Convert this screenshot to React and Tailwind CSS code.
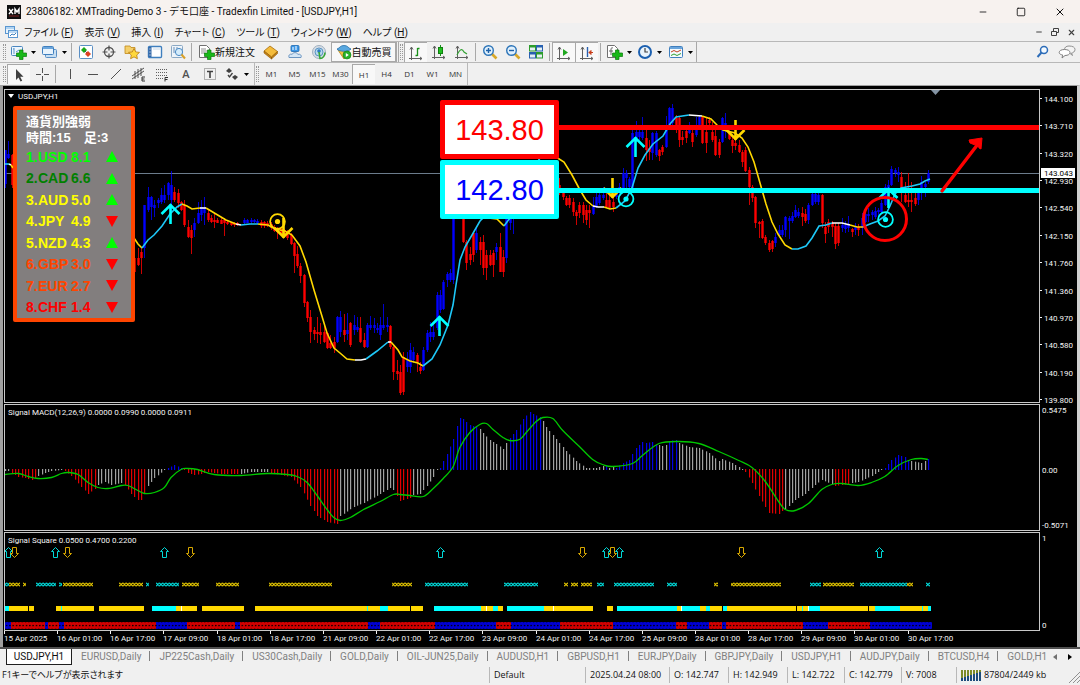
import React from "react";
import { Minus, Square, X } from "lucide-react";

const BAR_STEP = 3.32;
const barX = (i) => 5 + i * BAR_STEP;

const COLORS = {
	r: "#ff0000",
	b: "#0000ff",
	g: "#a0a0a0",
	y: "#ffd800",
	c: "#00ffff",
	w: "#ffffff",
};

// bar index, colour, high, body top, body bottom, low
const CANDLES = [
	[0, "b", 150, 150, 184, 188], [1, "b", 141, 154, 158, 159], [2, "r", 154, 155, 185, 188],
	[39, "r", 256, 258, 272, 273], [40, "r", 248, 258, 265, 266], [41, "r", 248, 252, 258, 274],
	[42, "b", 205, 205, 248, 258], [43, "b", 187, 197, 210, 212], [44, "b", 196, 197, 207, 220],
	[45, "b", 200, 205, 208, 217], [46, "b", 198, 200, 203, 208], [47, "b", 188, 195, 202, 204],
	[48, "b", 185, 195, 200, 203], [49, "b", 182, 183, 195, 200], [50, "b", 171, 185, 200, 211],
	[51, "r", 187, 192, 200, 202], [52, "r", 189, 193, 203, 208], [53, "r", 201, 202, 210, 211],
	[54, "r", 200, 205, 225, 227], [55, "r", 220, 227, 237, 238], [56, "r", 225, 230, 238, 254],
	[57, "b", 218, 223, 230, 237], [58, "b", 202, 213, 223, 224], [59, "b", 200, 207, 215, 221],
	[60, "b", 197, 208, 213, 225], [61, "r", 210, 213, 220, 222], [62, "r", 215, 218, 222, 223],
	[63, "r", 213, 220, 222, 228], [64, "r", 218, 220, 223, 223], [65, "r", 218, 220, 224, 224],
	[66, "r", 218, 220, 223, 236], [67, "r", 220, 222, 224, 225], [68, "r", 222, 222, 225, 226],
	[69, "r", 222, 223, 225, 227], [70, "r", 222, 223, 225, 226], [72, "b", 218, 220, 223, 224],
	[73, "b", 219, 220, 223, 223], [74, "b", 218, 220, 222, 224], [75, "b", 219, 220, 222, 223],
	[76, "b", 219, 221, 223, 224], [77, "r", 220, 222, 226, 228], [78, "r", 221, 222, 226, 228],
	[79, "r", 221, 223, 226, 227], [80, "r", 222, 224, 228, 230], [81, "r", 225, 227, 231, 232],
	[82, "r", 227, 229, 232, 239], [83, "r", 228, 229, 233, 234], [84, "r", 229, 230, 236, 237],
	[85, "r", 230, 232, 238, 240], [86, "r", 233, 235, 244, 245], [87, "r", 242, 243, 256, 273],
	[88, "r", 246, 254, 266, 268], [89, "r", 263, 266, 276, 283], [90, "r", 274, 275, 303, 307],
	[91, "r", 301, 302, 318, 322], [92, "r", 310, 317, 332, 343], [93, "r", 327, 330, 334, 340],
	[94, "r", 317, 332, 334, 343], [95, "r", 323, 332, 335, 344], [96, "r", 325, 332, 342, 343],
	[97, "r", 332, 333, 348, 349], [98, "r", 335, 343, 348, 349], [99, "r", 337, 342, 348, 353],
	[100, "b", 316, 317, 342, 343], [101, "b", 311, 317, 332, 337], [102, "r", 314, 330, 335, 342],
	[103, "b", 313, 330, 334, 340], [104, "r", 322, 323, 345, 347], [105, "b", 315, 325, 330, 335],
	[106, "b", 317, 327, 330, 332], [107, "r", 317, 328, 342, 343], [108, "r", 333, 340, 347, 348],
	[109, "b", 323, 325, 347, 348], [110, "b", 316, 325, 328, 330], [111, "b", 318, 325, 328, 333],
	[112, "b", 323, 328, 330, 333], [113, "b", 317, 325, 335, 340], [114, "b", 304, 325, 328, 330],
	[115, "b", 317, 325, 327, 332], [116, "r", 325, 326, 347, 349], [117, "r", 346, 347, 372, 380],
	[118, "r", 360, 371, 374, 380], [119, "r", 365, 372, 393, 395], [120, "r", 352, 357, 392, 395],
	[121, "b", 352, 360, 367, 372], [122, "b", 343, 350, 367, 373], [123, "b", 347, 352, 360, 363],
	[124, "r", 353, 355, 362, 372], [125, "r", 362, 367, 371, 374], [126, "b", 347, 350, 370, 371],
	[127, "b", 330, 333, 350, 352], [128, "b", 322, 332, 337, 342], [129, "b", 323, 332, 337, 340],
	[130, "b", 292, 295, 328, 330], [131, "b", 290, 295, 310, 313], [132, "b", 280, 282, 309, 310],
	[133, "b", 272, 274, 280, 287], [134, "b", 269, 273, 280, 282], [135, "b", 190, 192, 280, 284],
	[138, "r", 200, 218, 242, 243], [139, "r", 240, 242, 263, 270], [140, "r", 247, 254, 260, 265],
	[141, "r", 233, 233, 255, 262], [142, "b", 228, 233, 250, 253], [143, "r", 237, 242, 250, 265],
	[144, "r", 235, 242, 268, 275], [145, "r", 250, 255, 268, 280], [146, "r", 250, 255, 265, 266],
	[147, "r", 250, 253, 265, 277], [148, "b", 243, 247, 252, 260], [149, "r", 233, 247, 272, 272],
	[150, "r", 250, 257, 272, 277], [151, "b", 210, 218, 258, 263], [152, "b", 210, 215, 223, 230],
	[153, "b", 210, 214, 219, 234],
	[167, "r", 178, 185, 193, 195], [168, "r", 192, 193, 197, 200], [169, "r", 196, 198, 205, 206],
	[170, "r", 195, 198, 205, 208], [171, "r", 198, 202, 212, 216], [172, "r", 210, 212, 216, 225],
	[173, "r", 202, 205, 213, 218], [174, "r", 202, 205, 215, 223], [175, "r", 205, 210, 220, 225],
	[176, "r", 205, 210, 213, 228], [177, "b", 197, 205, 214, 215], [178, "b", 193, 197, 207, 208],
	[179, "b", 192, 195, 203, 205], [180, "b", 187, 195, 198, 200], [181, "r", 193, 200, 207, 208],
	[182, "r", 195, 200, 208, 209], [183, "r", 197, 202, 207, 212], [184, "b", 188, 191, 197, 199],
	[185, "b", 183, 187, 193, 195], [186, "b", 168, 173, 188, 190], [187, "b", 170, 173, 178, 190],
	[188, "b", 177, 179, 187, 188], [189, "b", 130, 133, 190, 190], [190, "b", 121, 132, 138, 142],
	[191, "b", 125, 132, 137, 140], [192, "b", 117, 132, 138, 140], [193, "r", 128, 138, 150, 161],
	[194, "r", 140, 148, 152, 160], [195, "b", 132, 133, 153, 160], [196, "b", 131, 133, 155, 157],
	[197, "r", 149, 150, 156, 161], [198, "r", 145, 147, 152, 155], [199, "b", 116, 125, 147, 148],
	[200, "b", 107, 108, 125, 127], [201, "b", 104, 108, 123, 125], [202, "r", 115, 118, 125, 133],
	[203, "r", 117, 118, 140, 147], [204, "r", 131, 137, 140, 145], [205, "r", 130, 131, 138, 143],
	[206, "b", 122, 125, 133, 134], [207, "r", 130, 133, 142, 147], [208, "b", 117, 125, 135, 137],
	[209, "b", 115, 117, 125, 127], [210, "r", 116, 117, 143, 144], [211, "r", 118, 132, 143, 153],
	[212, "r", 117, 120, 123, 128], [213, "r", 122, 132, 140, 142], [214, "r", 130, 136, 155, 156],
	[215, "r", 139, 142, 155, 158], [216, "b", 117, 118, 142, 143], [217, "b", 113, 123, 127, 138],
	[218, "r", 128, 133, 139, 140], [219, "r", 136, 140, 146, 153], [220, "r", 140, 143, 146, 150],
	[221, "r", 140, 145, 152, 153], [222, "r", 150, 152, 162, 167], [223, "r", 147, 150, 171, 172],
	[224, "r", 167, 170, 187, 205], [225, "r", 185, 187, 198, 202], [226, "r", 196, 197, 223, 228],
	[227, "r", 221, 222, 224, 238], [228, "r", 219, 221, 238, 239], [229, "r", 235, 237, 243, 245],
	[230, "r", 240, 243, 250, 252], [231, "r", 240, 241, 249, 252], [232, "b", 233, 237, 243, 247],
	[233, "b", 225, 230, 235, 237], [234, "b", 225, 230, 235, 237], [235, "b", 216, 217, 230, 237],
	[236, "b", 216, 218, 221, 239], [237, "b", 212, 216, 221, 223], [238, "b", 205, 210, 217, 218],
	[239, "b", 208, 212, 216, 218], [240, "r", 207, 213, 217, 226], [241, "r", 209, 214, 221, 223],
	[242, "b", 203, 205, 220, 224], [243, "b", 193, 194, 205, 206], [244, "b", 193, 194, 202, 204],
	[245, "b", 193, 195, 202, 205], [246, "r", 194, 195, 223, 228], [247, "r", 222, 227, 234, 243],
	[248, "r", 219, 222, 227, 233], [249, "r", 221, 223, 227, 237], [250, "r", 223, 226, 244, 249],
	[251, "r", 223, 226, 243, 246], [252, "b", 218, 225, 228, 232], [253, "b", 221, 225, 229, 233],
	[254, "b", 216, 225, 228, 232], [255, "r", 228, 229, 232, 237], [256, "b", 223, 226, 230, 235],
	[257, "r", 224, 227, 230, 236], [258, "b", 213, 218, 228, 235], [259, "b", 210, 214, 222, 223],
	[260, "b", 208, 214, 216, 222], [261, "b", 210, 212, 215, 220], [262, "b", 207, 211, 217, 219],
	[263, "b", 208, 210, 212, 216], [264, "b", 200, 203, 212, 213], [265, "b", 184, 187, 205, 206],
	[266, "b", 180, 185, 188, 195], [267, "b", 166, 169, 185, 186], [268, "b", 168, 170, 173, 177],
	[269, "b", 167, 172, 175, 182], [270, "r", 172, 177, 190, 202], [271, "r", 182, 195, 202, 203],
	[272, "r", 173, 200, 202, 207], [273, "r", 182, 200, 202, 212], [274, "r", 193, 198, 204, 206],
	[275, "b", 190, 193, 200, 205], [276, "b", 176, 182, 192, 200], [277, "b", 182, 184, 187, 197],
	[278, "b", 170, 173, 182, 184],
];

// moving average, one run per colour
const MA = [
	["c", [[5, 164], [9, 164]]],
	["w", [[9, 164], [11, 165]]],
	["y", [[11, 165], [13, 168]]],
	["y", [[134, 238], [138, 244], [142, 248]]],
	["c", [[142, 248], [148, 240], [154, 235], [162, 226], [170, 214], [177, 207], [182, 204]]],
	["y", [[182, 204], [187, 206], [192, 209], [200, 208]]],
	["w", [[200, 208], [206, 208]]],
	["y", [[206, 208], [216, 214], [226, 220], [236, 224]]],
	["w", [[236, 224], [241, 225]]],
	["c", [[241, 225], [250, 224], [258, 224]]],
	["y", [[258, 224], [268, 225], [275, 229], [285, 231], [292, 235], [300, 246], [306, 262], [314, 290], [321, 313], [327, 333], [334, 348], [340, 353], [347, 359], [355, 360]]],
	["w", [[355, 360], [361, 360], [366, 359]]],
	["c", [[366, 359], [377, 351], [388, 342]]],
	["w", [[388, 342], [391, 342]]],
	["y", [[391, 342], [398, 350], [402, 357], [410, 361], [418, 363], [423, 366]]],
	["c", [[423, 366], [432, 359], [440, 345], [448, 325], [453, 305], [456, 285], [460, 260], [465, 247], [472, 235], [480, 221], [487, 214]]],
	["y", [[488, 218], [497, 219], [504, 226]]],
	["c", [[504, 226], [510, 218], [520, 190], [540, 158]]],
	["y", [[556, 157], [564, 162], [572, 175], [580, 190], [586, 200], [593, 206]]],
	["w", [[593, 206], [598, 207], [604, 207]]],
	["y", [[604, 207], [610, 209], [616, 208]]],
	["c", [[616, 208], [625, 201], [632, 188], [638, 168], [645, 155], [653, 144], [663, 136], [670, 124], [676, 117], [689, 115]]],
	["w", [[689, 115], [702, 116]]],
	["y", [[702, 116], [711, 119], [717, 125], [723, 130], [735, 133], [742, 138], [748, 147], [754, 162], [760, 183], [766, 204], [772, 222], [778, 234], [785, 245], [792, 249]]],
	["c", [[792, 249], [798, 249], [806, 246], [812, 238], [819, 226], [826, 225], [832, 223]]],
	["w", [[832, 223], [842, 223], [850, 225]]],
	["y", [[850, 225], [857, 227], [863, 227]]],
	["c", [[863, 227], [870, 224], [878, 221], [885, 216], [890, 206], [895, 194], [901, 188], [912, 186], [920, 184], [925, 181], [930, 179]]],
];

// colour, then [bar index, height above zero]
const MACD = [
	["g", [[0, -2], [1, -2]]],
	["r", [[2, -4], [4, -8], [6, -9], [8, -11], [9, -9]]],
	["g", [[10, -7], [12, -4], [14, -2], [17, -1]]],
	["r", [[18, -2], [20, -7], [23, -18], [25, -25], [27, -20]]],
	["g", [[28, -16], [30, -13], [32, -16], [35, -14]]],
	["r", [[36, -16], [38, -25], [40, -31], [41, -31], [42, -24]]],
	["g", [[43, -17], [45, -9], [48, -1]]],
	["b", [[49, 2], [51, 5], [53, 2]]],
	["r", [[54, -1], [55, -4], [57, -6], [59, -5], [61, -3], [65, -5], [70, -5]]],
	["g", [[71, -5], [74, -3], [79, -3]]],
	["r", [[80, -4], [86, -8], [89, -18], [92, -37], [94, -47], [97, -53], [100, -55]]],
	["g", [[101, -47], [105, -38], [108, -34], [113, -25], [116, -19], [117, -21]]],
	["r", [[118, -27], [119, -32], [122, -29]]],
	["g", [[123, -26], [125, -25], [127, -17], [129, -8], [130, -1]]],
	["b", [[131, 2], [133, 16], [135, 31], [136, 44], [137, 52], [138, 51], [140, 45], [142, 43]]],
	["g", [[143, 41], [144, 37], [146, 30], [148, 26], [150, 21], [151, 27]]],
	["b", [[152, 32], [154, 40], [156, 51], [158, 58], [159, 56], [161, 53]]],
	["g", [[162, 49], [163, 43], [166, 31], [169, 19], [172, 9], [175, 2], [178, 2], [180, 4]]],
	["b", [[181, 4], [181, 4]]],
	["g", [[182, 2], [183, 3]]],
	["b", [[184, 2], [186, 7], [188, 10], [190, 22], [192, 28], [193, 27], [195, 28], [196, 25]]],
	["g", [[197, 25], [198, 24], [199, 25]]],
	["b", [[200, 29], [202, 30]]],
	["g", [[203, 27], [206, 23], [209, 22], [212, 17], [215, 9], [216, 11], [219, 7], [222, 1]]],
	["r", [[223, -3], [225, -14], [227, -27], [229, -38], [230, -44], [233, -45], [234, -42]]],
	["g", [[235, -40], [238, -31], [241, -25], [244, -16], [246, -11], [249, -15]]],
	["r", [[250, -17], [252, -16], [254, -15]]],
	["g", [[255, -14], [257, -13], [261, -7], [264, -1]]],
	["b", [[265, 2], [267, 10], [269, 15], [271, 13], [272, 10]]],
	["g", [[273, 9], [276, 7], [277, 9]]],
	["b", [[278, 11], [278, 11]]],
];

const MACD_SIGNAL = [
	[0, -5], [4, -4], [7, -7], [10, -9], [14, -8], [17, -4], [19, -3], [22, -5], [25, -13], [28, -18],
	[31, -19], [35, -16], [37, -16], [40, -21], [42, -24], [45, -23], [48, -18], [50, -8], [53, 0],
	[55, 1], [58, 0], [63, -5], [71, -6], [79, -4], [85, -5], [88, -7], [91, -13], [94, -26],
	[97, -40], [99, -48], [101, -51], [104, -48], [108, -40], [113, -32], [117, -25], [119, -25],
	[122, -26], [126, -27], [129, -19], [132, -9], [135, 3], [137, 22], [140, 37], [143, 45],
	[145, 46], [147, 40], [150, 32], [152, 29], [155, 30], [157, 37], [160, 48], [162, 52],
	[165, 51], [168, 39], [173, 23], [177, 10], [180, 5], [183, 3], [189, 6], [192, 14], [197, 26],
	[203, 28], [209, 26], [215, 18], [221, 9], [225, 2], [229, -12], [233, -32], [235, -40],
	[238, -41], [242, -34], [246, -20], [249, -15], [252, -14], [257, -16], [261, -13], [265, -7],
	[269, 4], [273, 10], [276, 11], [278, 10],
];

const CROSSES = [
	["c", 5, 9], ["y", 9, 20], ["y", 23, 26], ["c", 36, 56], ["c", 59, 62], ["y", 63, 93],
	["y", 119, 143], ["c", 146, 149], ["c", 156, 179], ["y", 182, 199], ["y", 216, 239],
	["y", 269, 332], ["y", 392, 412], ["c", 425, 468], ["c", 504, 538], ["y", 564, 568],
	["y", 571, 578], ["y", 581, 592], ["c", 597, 604], ["c", 614, 654], ["c", 667, 677],
	["y", 714, 718], ["y", 731, 781], ["c", 810, 821], ["y", 823, 854], ["c", 860, 907],
	["y", 907, 913], ["c", 926, 930],
];

const SQUARES = [
	["c", 5, 9], ["y", 9, 28], ["y", 29, 34], ["y", 56, 94], ["c", 61, 62], ["y", 99, 144],
	["c", 152, 176], ["y", 176, 197], ["w", 181, 182], ["y", 202, 244], ["y", 255, 380],
	["c", 367, 368], ["c", 380, 388], ["y", 388, 410], ["y", 411, 423], ["c", 434, 481],
	["y", 481, 493], ["w", 486, 487], ["c", 493, 498], ["y", 498, 503], ["c", 507, 544],
	["y", 544, 593], ["w", 553, 554], ["y", 607, 613], ["c", 617, 677], ["y", 677, 681],
	["w", 681, 682], ["c", 682, 700], ["y", 700, 706], ["c", 706, 710], ["y", 710, 722],
	["c", 723, 727], ["y", 727, 796], ["y", 797, 808], ["c", 802, 803], ["w", 808, 809],
	["c", 809, 820], ["y", 820, 868], ["y", 869, 875], ["c", 875, 900], ["y", 900, 928],
	["c", 922, 923], ["c", 928, 931],
];

const TREND = [
	["b", 5, 11], ["r", 11, 59], ["b", 45, 48], ["b", 59, 64], ["r", 64, 156], ["b", 156, 187],
	["r", 187, 235], ["b", 235, 240], ["r", 240, 368], ["b", 368, 380], ["r", 380, 435],
	["b", 435, 496], ["r", 496, 511], ["b", 511, 560], ["r", 560, 613], ["b", 613, 676],
	["r", 676, 687], ["b", 687, 709], ["r", 709, 803], ["b", 722, 726], ["b", 803, 828],
	["r", 828, 870], ["b", 870, 932],
];

const SIGNALS_UP = [8, 55, 164, 440, 606, 619, 879];
const SIGNALS_DOWN = [14, 67, 190, 582, 612, 741];

const PRICES = ["144.100", "143.710", "143.320", "142.930", "142.540", "142.150", "141.760", "141.360", "140.970", "140.580", "140.190", "139.800"];

const TIMES = ["15 Apr 2025", "16 Apr 01:00", "16 Apr 17:00", "17 Apr 09:00", "18 Apr 01:00", "18 Apr 17:00", "21 Apr 09:00", "22 Apr 01:00", "22 Apr 17:00", "23 Apr 09:00", "24 Apr 01:00", "24 Apr 17:00", "25 Apr 09:00", "28 Apr 01:00", "28 Apr 17:00", "29 Apr 09:00", "30 Apr 01:00", "30 Apr 17:00"];

const STRENGTH = [
	["1.", "USD", "8.1", true, "text-[#00ff00]"],
	["2.", "CAD", "6.6", true, "text-[#008000]"],
	["3.", "AUD", "5.0", true, "text-[#ffff00]"],
	["4.", "JPY", "4.9", false, "text-[#ffff00]"],
	["5.", "NZD", "4.3", true, "text-[#ffff00]"],
	["6.", "GBP", "3.0", false, "text-[#ff4500]"],
	["7.", "EUR", "2.7", false, "text-[#ff4500]"],
	["8.", "CHF", "1.4", false, "text-[#ff0000]"],
];

const MENU = [
	["ファイル", "F"],
	["表示", "V"],
	["挿入", "I"],
	["チャート", "C"],
	["ツール", "T"],
	["ウィンドウ", "W"],
	["ヘルプ", "H"],
];

const TABS = ["EURUSD,Daily", "JP225Cash,Daily", "US30Cash,Daily", "GOLD,Daily", "OIL-JUN25,Daily", "AUDUSD,H1", "GBPUSD,H1", "EURJPY,Daily", "GBPJPY,Daily", "USDJPY,H1", "AUDJPY,Daily", "BTCUSD,H4", "GOLD,H1"];

const chartFont = "font-['Roboto','Noto_Sans_CJK_JP',sans-serif] text-[8px] fill-[#f4f4f4]";

const toPoints = (pts) => pts.map((p) => p.join(",")).join(" ");

const valueAt = (pts, i) => {
	for (let k = 1; k < pts.length; k++) {
		const [x0, y0] = pts[k - 1];
		const [x1, y1] = pts[k];
		if (i <= x1) return x1 === x0 ? y1 : y0 + ((y1 - y0) * (i - x0)) / (x1 - x0);
	}
	return pts[pts.length - 1][1];
};

function smooth(pts) {
	let d = `M${pts[0][0]},${pts[0][1]}`;
	for (let k = 0; k < pts.length - 1; k++) {
		const a = pts[k - 1] || pts[k];
		const b = pts[k];
		const c = pts[k + 1];
		const e = pts[k + 2] || c;
		d += `C${b[0] + (c[0] - a[0]) / 6},${b[1] + (c[1] - a[1]) / 6} ${c[0] - (e[0] - b[0]) / 6},${c[1] - (e[1] - b[1]) / 6} ${c[0]},${c[1]}`;
	}
	return d;
}

function TradeArrow({ x, y, down }) {
	const s = down ? -1 : 1;
	return (
		<path
			d={`M${x},${y}v${s * 20}M${x - 9},${y + s * 10}L${x},${y + s}L${x + 9},${y + s * 10}`}
			fill="none"
			stroke={down ? COLORS.y : COLORS.c}
			strokeWidth="2.6"
		/>
	);
}

function Target({ x, y, color }) {
	return (
		<g>
			<circle cx={x} cy={y} r="7.4" fill="none" stroke={color} strokeWidth="1.8" />
			<circle cx={x} cy={y} r="2.6" fill={color} />
		</g>
	);
}

function PricePlot() {
	return (
		<svg className="block w-full h-[312px]">
			<g transform="translate(-5 -90)">
				<rect x="5" y="173" width="100%" height="1" fill="#6c7c8c" />
				{CANDLES.map(([i, c, hi, top, bottom, lo]) => {
					const x = Math.round(barX(i));
					return (
						<g key={i} fill={COLORS[c]}>
							<rect x={x} y={hi} width="1" height={lo - hi} opacity="0.8" />
							<rect x={x - 0.7} y={top} width="2.4" height={bottom - top} />
						</g>
					);
				})}
				{MA.map(([c, pts], k) => (
					<polyline key={k} points={toPoints(pts)} fill="none" stroke={c === "c" ? "#1ec8f8" : COLORS[c]} strokeWidth="1.6" />
				))}
				<TradeArrow x={170.5} y={204} />
				<TradeArrow x={439.5} y={316} />
				<TradeArrow x={635.5} y={137} />
				<TradeArrow x={888.5} y={188} />
				<TradeArrow x={283.5} y={238} down />
				<TradeArrow x={612.5} y={198} down />
				<TradeArrow x={735.5} y={140} down />
				<Target x={277.5} y={221.5} color={COLORS.y} />
				<Target x={626} y={199} color={COLORS.c} />
				<rect x="556" y="125" width="100%" height="5" fill="#ff0000" />
				<rect x="556" y="188" width="100%" height="5" fill="#00ffff" />
				<Target x={885.5} y={219.5} color={COLORS.c} />
				<circle cx="885" cy="219" r="21.5" fill="none" stroke="#ff0000" strokeWidth="3" />
				<path d="M942,191L978,144" stroke="#ff0000" strokeWidth="3.4" strokeLinecap="round" />
				<path d="M982,138l-1,11-2-1-1-4-3,1-5-2-1-3z" fill="#ff0000" stroke="#ff0000" />
				<path d="M931,90h9l-4.500,5z" fill="#8494a4" />
				<path d="M8,94h6l-3,4z" fill="#ffffff" />
				<text x="18" y="99" className={chartFont}>USDJPY,H1</text>
			</g>
		</svg>
	);
}

function MacdPlot() {
	const bars = [];
	MACD.forEach(([c, pts]) => {
		for (let i = pts[0][0]; i <= pts[pts.length - 1][0]; i++) {
			bars.push([i, c, valueAt(pts, i)]);
		}
	});
	return (
		<svg className="block w-full h-[125px]">
			<g transform="translate(-5 -405)">
				{bars.map(([i, c, v]) => (
					<rect
						key={i}
						x={Math.round(barX(i))}
						y={v > 0 ? 470 - v : 469}
						width="1.2"
						height={Math.max(1, Math.abs(v))}
						fill={c === "r" ? "#e00000" : c === "b" ? "#0000e8" : COLORS.g}
					/>
				))}
				<path d={smooth(MACD_SIGNAL.map(([i, v]) => [barX(i), 469.5 - v]))} fill="none" stroke="#00c800" strokeWidth="1.3" />
				<text x="8" y="415" className={chartFont}>Signal MACD(12,26,9) 0.0000 0.0990 0.0000 0.0911</text>
			</g>
		</svg>
	);
}

function SquarePlot() {
	return (
		<svg className="block w-full h-[97px]">
			<defs>
				<pattern id="dots" x="5" y="622" width="3.32" height="7" patternUnits="userSpaceOnUse">
					<circle cx="1.6" cy="3.6" r="0.8" fill="#000000" />
					<path d="M0,0.500h1.200M0,6.500h1.200" stroke="#000000" strokeOpacity="0.35" />
				</pattern>
				<pattern id="cross-y" x="0" y="582" width="3.32" height="5" patternUnits="userSpaceOnUse">
					<path d="M0,0.800L3.320,4.200M0,4.200L3.320,0.800" stroke="#f4d400" strokeWidth="1.100" />
				</pattern>
				<pattern id="cross-c" x="0" y="582" width="3.32" height="5" patternUnits="userSpaceOnUse">
					<path d="M0,0.800L3.320,4.200M0,4.200L3.320,0.800" stroke="#00ecec" strokeWidth="1.100" />
				</pattern>
			</defs>
			<g transform="translate(-5 -533)">
				<text x="8" y="543" className={chartFont}>Signal Square 0.0500 0.4700 0.2200</text>
				{SIGNALS_UP.map((x) => (
					<path key={x} d={`M${x + 0.5},547.500l4,4h-2v6h-4v-6h-2z`} fill="none" stroke="#00d8d8" />
				))}
				{SIGNALS_DOWN.map((x) => (
					<path key={x} d={`M${x + 0.5},557.500l4,-4h-2v-6h-4v6h-2z`} fill="none" stroke="#d8a800" />
				))}
				{CROSSES.map(([c, a, b]) => (
					<rect key={a} x={a} y="582" width={b - a} height="5" fill={c === "y" ? "url(#cross-y)" : "url(#cross-c)"} />
				))}
				{SQUARES.map(([c, a, b]) => (
					<rect key={a} x={a} y="606" width={b - a} height="5" fill={COLORS[c]} />
				))}
				{TREND.map(([c, a, b]) => (
					<rect key={a} x={a} y="622" width={b - a} height="7" fill={c === "r" ? "#d00000" : "#0000d0"} />
				))}
				<rect x="5" y="622" width="927" height="7" fill="url(#dots)" />
			</g>
		</svg>
	);
}

function PriceAxis() {
	return (
		<svg className="block w-[37px] shrink-0 h-[558px]">
			<g transform="translate(-1040 -89)" className={chartFont}>
				{PRICES.map((p, k) => {
					const y = 99 + (k * 301) / 11;
					return (
						<g key={p}>
							<rect x="1040" y={Math.round(y) - 1} width="2" height="1" />
							<text x="1044" y={Math.round(y) + 3}>{p}</text>
						</g>
					);
				})}
				<rect x="1041" y="168" width="34" height="10" fill="#ffffff" />
				<text x="1044" y="176" className="fill-black">143.043</text>
				<text x="1042" y="413">0.5475</text>
				<text x="1042" y="473">0.00</text>
				<text x="1042" y="528">-0.5071</text>
				<text x="1042" y="541">1</text>
				<text x="1042" y="628">0</text>
			</g>
		</svg>
	);
}

function TimeAxis() {
	return (
		<svg className="block w-full h-4">
			<g className={chartFont}>
				{TIMES.map((t, k) => {
					const x = Math.round(k * 53.15);
					return (
						<g key={t}>
							<rect x={x} y="0" width="1" height="3" />
							<text x={x} y="10">{t}</text>
						</g>
					);
				})}
			</g>
		</svg>
	);
}

function StrengthPanel() {
	return (
		<div className="absolute left-2 top-4 w-[122px] border-4 border-[#ff4500] bg-[#827e7e] pl-[9px] pt-1 rounded-xs font-['Liberation_Sans','Noto_Sans_CJK_JP',sans-serif] text-[13px] leading-4 font-bold text-white">
			<div>通貨別強弱</div>
			<div className="whitespace-pre">時間:15　足:3</div>
			<table className="w-[96px] h-[172px] border-collapse text-sm leading-4">
				<tbody>
					{STRENGTH.map(([n, code, value, up, color]) => (
						<tr key={code} className={color}>
							<td className="p-0 w-3">{n}</td>
							<td className="p-0 w-[33px]">{code}</td>
							<td className="p-0">{value}</td>
							<td className="p-0 w-4">
								<svg width="12" height="11">
									<path d={up ? "M6,0L12,11H0z" : "M0,0H12L6,11z"} fill={up ? "#00ff00" : "#ff0000"} />
								</svg>
							</td>
						</tr>
					))}
				</tbody>
			</table>
		</div>
	);
}

function Pane({ children }) {
	return <div className="relative border border-[#c8c8c8] overflow-hidden">{children}</div>;
}

function Icon({ children, w = 16 }) {
	return (
		<svg width={w} height="16" viewBox={`0 0 ${w} 16`} fill="none" className="shrink-0">
			{children}
		</svg>
	);
}

function Caret() {
	return (
		<svg width="5" height="3" className="shrink-0">
			<path d="M0,0h5l-2.500,3z" fill="#000000" />
		</svg>
	);
}

function Tool({ label, active, caret, wide, children }) {
	return (
		<button
			aria-label={label}
			className={`h-5 shrink-0 flex items-center justify-center ${caret ? "w-[31px] gap-1" : wide ? "w-6" : "w-[23px]"} ${
				active ? "bg-[#f8f8f8] border-l border-t border-[#a8a8a8]" : ""
			}`}
		>
			{children}
			{caret && <Caret />}
		</button>
	);
}

const Sep = () => <div className="w-px h-[18px] mx-[2px] bg-[#a8a8a8] shrink-0" />;

const Grip = () => (
	<div className="w-[3px] h-4 mx-px shrink-0 border-x border-dotted border-[#989898]" />
);

const Plus = () => (
	<path d="M9.500,6h3.500v3h3.500v3.500h-3.500v3h-3.500v-3h-3v-3.500h3z" fill="#18b818" stroke="#0a7a0a" strokeWidth="0.700" />
);

function MainToolbar() {
	return (
		<div className="h-[22px] flex items-center border-t border-b border-[#b8b8b8] pl-[2px]">
			<div className="flex items-center h-full border-r border-[#a8a8a8]">
				<Grip />
				<Tool label="新規チャート" caret>
					<Icon w={17}>
						<rect x="1.5" y="2.5" width="11" height="9" rx="1" fill="#eef6fd" stroke="#4a86c0" />
						<path d="M4,4v6M3,5h1M6,8l3-2" stroke="#5a96cc" />
						<Plus />
					</Icon>
				</Tool>
				<Tool label="プロファイル" caret>
					<Icon w={17}>
						<rect x="4.500" y="5.500" width="11" height="8" rx="1" fill="#c8dff2" stroke="#5a8fc4" />
						<rect x="1.500" y="2.500" width="11" height="8" rx="1" fill="#e8f3fc" stroke="#3f7fbe" />
						<path d="M2,4h10" stroke="#6aa5dc" strokeWidth="2" />
					</Icon>
				</Tool>
				<Sep />
				<Tool label="気配値">
					<Icon>
						<rect x="1.500" y="1.500" width="13" height="13" rx="1" fill="#ffffff" stroke="#5a8fc4" />
						<path d="M3,6l3-3 3,3-3,3z" fill="#18a818" />
						<path d="M7,7l2,2" stroke="#505050" />
						<path d="M7,10l3-3 3,3-3,3z" fill="#e04020" />
					</Icon>
				</Tool>
				<Tool label="データウィンドウ">
					<Icon>
						<circle cx="8" cy="8" r="4.500" stroke="#505050" strokeWidth="1.300" />
						<path d="M8,1.500v5M8,9.500v5M1.500,8h5M9.500,8h5" stroke="#505050" strokeWidth="1.200" />
					</Icon>
				</Tool>
				<Tool label="ナビゲーター">
					<Icon>
						<path d="M1,2h5l1,1.500h4v6H1z" fill="#f4cf6a" stroke="#c08818" strokeWidth="0.800" />
						<path d="M10,4.500l1.700,3.400 3.800,.5-2.800,2.600.7,3.700-3.400-1.800-3.400,1.800.7-3.700-2.800-2.600 3.800-.5z" fill="#ffd83c" stroke="#b87a10" strokeWidth="0.800" />
					</Icon>
				</Tool>
				<Tool label="ターミナル">
					<Icon>
						<rect x="1.500" y="2.500" width="13" height="11" rx="1" fill="#ffffff" stroke="#3f7fbe" strokeWidth="1.400" />
						<path d="M3,3v10" stroke="#3468a8" strokeWidth="3" />
						<path d="M2.500,5h1M2.500,8h1M2.500,11h1" stroke="#ffffff" />
						<path d="M6,5h7" stroke="#c8d8e8" />
					</Icon>
				</Tool>
				<Tool label="ストラテジーテスター">
					<Icon>
						<rect x="1.500" y="1.500" width="11" height="12" rx="1" fill="#eef4fa" stroke="#8aa8c4" />
						<path d="M4,3v6M7,3v3" stroke="#6a90b8" />
						<circle cx="9" cy="8" r="3.600" fill="#d4ecfc" stroke="#4a8ac4" />
						<path d="M11.500,10.500l3.500,4" stroke="#d8a028" strokeWidth="2" />
					</Icon>
				</Tool>
				<Sep />
				<button className="h-5 w-[65px] flex items-center justify-center whitespace-nowrap text-[10px]">
					<Icon w={17}>
						<path d="M1.500,1.500h7l3,3v9h-10z" fill="#ffffff" stroke="#707070" />
						<path d="M3,5h5M3,7h6M3,9h4" stroke="#909090" />
						<Plus />
					</Icon>
					新規注文
				</button>
				<Tool label="メタエディター" wide>
					<Icon>
						<path d="M1,7l6-5 7.500,5.500-6,5.500z" fill="#f4bc3c" stroke="#a86c08" strokeWidth="0.800" />
						<path d="M1,7v2l7.500,6v-2zM8.500,15l6-5.500v-2l-6,5.500z" fill="#c88414" stroke="#8c5806" strokeWidth="0.600" />
					</Icon>
				</Tool>
				<Tool label="マーケット" wide>
					<Icon>
						<rect x="4" y="1.500" width="8" height="6" rx="1" fill="#3c98e8" stroke="#1c68b0" strokeWidth="0.800" />
						<path d="M6,3v3M8,3h2M8,5h2" stroke="#ffffff" />
						<path d="M2,13.500c-1-3 2-4 3-3 1-2.500 5-2.500 6,0 2-1 4,1 3,3z" fill="#d4e6f6" stroke="#6a94c0" />
					</Icon>
				</Tool>
				<Tool label="シグナル" wide>
					<Icon>
						<circle cx="8" cy="8" r="6.500" fill="#d4dce4" stroke="#a0b0c0" />
						<circle cx="8" cy="8" r="4" fill="#b8d8ec" stroke="#5a94c4" />
						<circle cx="8" cy="7" r="1.800" fill="#2878c0" />
						<path d="M8,8l1,6.500c3,0 5-3 5-6" stroke="#38a838" strokeWidth="1.600" />
					</Icon>
				</Tool>
				<button className="h-5 w-[65px] bg-[#f8f8f8] border border-[#a8a8a8] flex items-center justify-center whitespace-nowrap text-[10px]">
					<Icon>
						<path d="M2,6l6,9 5-8z" fill="#f0c040" stroke="#b08010" strokeWidth="0.800" />
						<path d="M1,5c3-1 3-3.500 7-3.500s4,2.500 7,3.500c-2,3-12,3-14,0z" fill="#58a8e0" stroke="#2870a8" strokeWidth="0.800" />
						<circle cx="11" cy="11" r="4" fill="#28b028" stroke="#108010" strokeWidth="0.600" />
						<path d="M9.800,9v4l3-2z" fill="#ffffff" />
					</Icon>
					自動売買
				</button>
			</div>
			<div className="flex items-center h-full border-x border-[#a8a8a8] ml-px">
				<Grip />
				<Tool label="バーチャート" active>
					<Icon>
						<path d="M3.500,2v13M1,13.500h13M2,4.500l1.500-2.500 1.500,2.500M12,12l2,1.500-2,1.500" stroke="#606060" />
						<path d="M9.500,3v8M7.500,10.500h2M9.500,3.500h2" stroke="#189018" strokeWidth="1.300" />
					</Icon>
				</Tool>
				<Tool label="ローソク足">
					<Icon>
						<path d="M3.500,2v13M1,13.500h13M2,4.500l1.500-2.500 1.500,2.500M12,12l2,1.500-2,1.500" stroke="#606060" />
						<path d="M9.500,1v11" stroke="#189018" />
						<rect x="7.500" y="3.500" width="4" height="6" fill="#20c020" stroke="#108010" />
					</Icon>
				</Tool>
				<Tool label="ラインチャート">
					<Icon>
						<path d="M3.500,2v13M1,13.500h13M2,4.500l1.500-2.500 1.500,2.500M12,12l2,1.500-2,1.500" stroke="#606060" />
						<path d="M3,11c3-6 5-7 7-3l3,2" stroke="#30a030" strokeWidth="1.200" />
					</Icon>
				</Tool>
				<Sep />
				<Tool label="ズームイン">
					<Icon>
						<path d="M10,10l4.500,4.500" stroke="#d8a828" strokeWidth="2.600" />
						<circle cx="6.500" cy="6.500" r="4.800" fill="#e0f0fc" stroke="#2c74b8" strokeWidth="1.400" />
						<path d="M4,6.500h5M6.500,4v5" stroke="#1c60a8" strokeWidth="1.400" />
					</Icon>
				</Tool>
				<Tool label="ズームアウト">
					<Icon>
						<path d="M10,10l4.500,4.500" stroke="#d8a828" strokeWidth="2.600" />
						<circle cx="6.500" cy="6.500" r="4.800" fill="#e0f0fc" stroke="#2c74b8" strokeWidth="1.400" />
						<path d="M4,6.500h5" stroke="#1c60a8" strokeWidth="1.400" />
					</Icon>
				</Tool>
				<Tool label="整列">
					<Icon>
						<rect x="1" y="1" width="7" height="6.500" fill="#2c9c2c" />
						<rect x="8" y="1" width="7" height="6.500" fill="#2860b0" />
						<rect x="1" y="8" width="7" height="6.500" fill="#2860b0" />
						<rect x="8" y="8" width="7" height="6.500" fill="#2c9c2c" />
						<path d="M2,3.500h5v3h-5zM9,3.500h5v3h-5zM2,10.500h5v3h-5zM9,10.500h5v3h-5z" fill="#e4f0f4" />
					</Icon>
				</Tool>
				<Sep />
				<Tool label="自動スクロール" active>
					<Icon>
						<path d="M3.500,2v13M1,13.500h13M2,4.500l1.500-2.500 1.500,2.500M12,12l2,1.500-2,1.500" stroke="#606060" />
						<path d="M7,4v7l5-3.500z" fill="#20a820" />
					</Icon>
				</Tool>
				<Tool label="チャートシフト" active>
					<Icon>
						<path d="M3.500,2v13M1,13.500h13M2,4.500l1.500-2.500 1.500,2.500M12,12l2,1.500-2,1.500" stroke="#606060" />
						<path d="M8.500,2v10" stroke="#2860b0" strokeWidth="1.400" />
						<path d="M14,7.500h-4M12,5.500l-2,2 2,2z" fill="#c83c18" stroke="#c83c18" />
					</Icon>
				</Tool>
				<Sep />
				<Tool label="インディケータ" caret>
					<Icon w={17}>
						<path d="M1.500,1.500h7l3,3v9h-10z" fill="#ffffff" stroke="#707070" />
						<path d="M5,11V5c0-1 1-1.500 2-1M3,7h4" stroke="#606060" />
						<Plus />
					</Icon>
				</Tool>
				<Tool label="時間足" caret>
					<Icon>
						<circle cx="8" cy="8" r="6" fill="#eaf4fc" stroke="#1c60b0" strokeWidth="2" />
						<path d="M8,4v4h3" stroke="#404040" strokeWidth="1.200" />
					</Icon>
				</Tool>
				<Tool label="定型チャート" caret>
					<Icon>
						<rect x="1.500" y="2.500" width="13" height="11" rx="1" fill="#f4fafe" stroke="#3f7fbe" />
						<path d="M2,4h12" stroke="#6aa5dc" strokeWidth="2" />
						<path d="M3,8l3-1.500 3,1.500 4-2" stroke="#c04020" />
						<path d="M3,11.500l3-1.500 3,1.500 4-2" stroke="#30a030" />
					</Icon>
				</Tool>
			</div>
			<div className="flex items-center gap-2 ml-auto pr-1">
				<button aria-label="検索">
					<Icon>
						<circle cx="10" cy="6" r="3.500" fill="#f4faff" stroke="#2c6cb8" strokeWidth="1.500" />
						<path d="M7.500,8.500l-4,4.500" stroke="#2c6cb8" strokeWidth="2" />
					</Icon>
				</button>
				<button aria-label="チャット">
					<Icon w={18}>
						<path d="M11,2c4,0 6,1.500 6,3.500S15,9 13.500,9l1,2.500-3-2.500c-3,0-5-1.500-5-3.500S8,2 11,2z" fill="#f4f4f4" stroke="#909090" />
						<path d="M6.500,5.500c3.500,0 5.500,1.300 5.500,3s-2,3-5,3l-3,2.500 .7-3c-2-.3-3.500-1.200-3.500-2.500 0-1.700 2-3 5.300-3z" fill="#ffffff" stroke="#808080" />
					</Icon>
				</button>
			</div>
		</div>
	);
}

function LineToolbar() {
	const frames = ["M1", "M5", "M15", "M30", "H1", "H4", "D1", "W1", "MN"];
	return (
		<div className="h-[22px] flex items-center pl-[2px]">
			<Grip />
			<Tool label="カーソル" active>
				<Icon><path d="M5,2v11l2.500-2.500 2,4 1.700-.8-2-3.900h3.300z" fill="#404040" /></Icon>
			</Tool>
			<Tool label="クロスヘア">
				<Icon><path d="M8.500,2v5M8.500,10v5M2,8.500h5M10,8.500h5" stroke="#505050" /></Icon>
			</Tool>
			<Sep />
			<Tool label="垂直線">
				<Icon><path d="M8.500,3v10" stroke="#505050" /></Icon>
			</Tool>
			<Tool label="水平線">
				<Icon><path d="M3,8.500h10" stroke="#505050" /></Icon>
			</Tool>
			<Tool label="トレンドライン">
				<Icon><path d="M3,13L13,3" stroke="#505050" /></Icon>
			</Tool>
			<Tool label="チャネル">
				<Icon>
					<path d="M1,10l12-8M1,13l12-8M4,5v8M7,3v9M10,2v8" stroke="#505050" />
					<path d="M14,11h-3v4h3M11,13h2.500" stroke="#303030" />
				</Icon>
			</Tool>
			<Tool label="フィボナッチ" wide>
				<Icon>
					<path d="M2,3.500h12M2,6.500h12M2,9.500h12M2,12.500h7" stroke="#606060" strokeDasharray="1 1" />
					<path d="M14,11.500h-3v4M11,13.500h2.500" stroke="#303030" />
				</Icon>
			</Tool>
			<button aria-label="テキスト" className="w-6 h-5 text-[11px] font-semibold text-[#505050]">A</button>
			<Tool label="ラベル">
				<Icon>
					<rect x="2.500" y="2.500" width="11" height="11" stroke="#707070" strokeDasharray="1 1" />
					<path d="M5,5.500h6M8,5v7" stroke="#404040" strokeWidth="1.600" />
				</Icon>
			</Tool>
			<Tool label="矢印" caret>
				<Icon>
					<path d="M2,5l3-3 3,3-3,2z" fill="#404040" />
					<path d="M14,11l-3,3-3-3 3-2z" fill="#404040" />
					<path d="M4,9l1.500,2 3-4" stroke="#404040" strokeWidth="1.300" />
				</Icon>
			</Tool>
			<div className="flex items-center h-full border-x border-[#b8b8b8] ml-[2px]">
				<Grip />
				{frames.map((f) => (
					<button
						key={f}
						className={`w-[23px] h-5 text-[8px] text-[#303030] ${f === "H1" ? "bg-[#f8f8f8] border-l border-t border-[#a8a8a8]" : ""}`}
					>
						{f}
					</button>
				))}
			</div>
		</div>
	);
}

function StatusCell({ className, children }) {
	return (
		<div className={`h-4 shrink-0 border-l border-[#b8b8b8] pl-1 flex items-center whitespace-nowrap ${className}`}>
			{children}
		</div>
	);
}

export default function App() {
	return (
		<div className="min-h-screen w-full overflow-hidden flex flex-col bg-[#f0f0f0] text-[#101010] font-['Open_Sans','Noto_Sans_CJK_JP',sans-serif]">
			<header className="h-[23px] flex items-center bg-[#f7f2ef] pl-[7px] text-[10px] font-['Roboto','Noto_Sans_CJK_JP',sans-serif]">
				<svg width="14" height="14" className="shrink-0 mr-[5px]">
					<rect width="14" height="14" fill="#101010" />
					<path d="M2,4l4,5M6,4l-4,5M8,9V4l2,3 2-3v5" stroke="#ffffff" strokeWidth="1.400" fill="none" />
					<path d="M2,11h10" stroke="#802020" />
				</svg>
				<h1 className="whitespace-nowrap">23806182: XMTrading-Demo 3 - デモ口座 - Tradexfin Limited - [USDJPY,H1]</h1>
				<div className="ml-auto flex items-center gap-7 pr-[14px]">
					<button aria-label="最小化"><Minus size={10} strokeWidth={2} /></button>
					<button aria-label="最大化"><Square size={10} strokeWidth={2} /></button>
					<button aria-label="閉じる"><X size={12} strokeWidth={2} /></button>
				</div>
			</header>

			<nav className="h-[18px] flex items-center pl-[5px] text-[10px] font-['Roboto','Noto_Sans_CJK_JP',sans-serif]">
				<Icon w={13}>
					<rect x="0.500" y="2.500" width="9" height="7" fill="#e8f3fc" stroke="#5a96d0" />
					<rect x="3.500" y="6.500" width="9" height="7" fill="#ffffff" stroke="#5a96d0" />
					<path d="M1,4h8M4,8h8" stroke="#7ab4e8" />
					<path d="M5,12l2-2 2,1 2-2" stroke="#3f7fbe" />
				</Icon>
				<div className="flex gap-[11px] ml-[6px] whitespace-nowrap [font-feature-settings:'palt']">
					{MENU.map(([name, key]) => (
						<button key={key}>
							{name} (<span className="underline">{key}</span>)
						</button>
					))}
				</div>
				<div className="ml-auto flex items-center gap-2 pr-1 text-[#404040]">
					<button aria-label="子ウィンドウを最小化"><Minus size={8} strokeWidth={3} /></button>
					<button aria-label="子ウィンドウを元に戻す">
						<svg width="8" height="8" fill="none" stroke="#404040"><path d="M0.500,3.500h5v4h-5zM2.500,3v-2.500h5v4h-2" /></svg>
					</button>
					<button aria-label="子ウィンドウを閉じる"><X size={9} strokeWidth={3} /></button>
				</div>
			</nav>

			<MainToolbar />
			<LineToolbar />

			<main className="bg-black border-t border-l-[3px] border-[#a0a0a0] border-r-[3px] border-r-[#d0d0d0] pl-px pt-[3px] flex">
				<div className="flex-1 min-w-0 flex flex-col gap-px">
					<Pane>
						<PricePlot />
						<StrengthPanel />
						<div className="absolute left-[435px] top-[10px] w-[119px] flex flex-col gap-px font-['Liberation_Sans',sans-serif] text-[29px] text-center">
							<div className="h-[59px] leading-[50px] rounded-xs border-[5px] border-[#ff0000] bg-white text-[#ff0000]">143.80</div>
							<div className="h-[59px] leading-[50px] rounded-xs border-[5px] border-[#00ffff] bg-white text-[#0000ff]">142.80</div>
						</div>
					</Pane>
					<Pane>
						<MacdPlot />
					</Pane>
					<div>
						<Pane>
							<SquarePlot />
						</Pane>
						<TimeAxis />
					</div>
				</div>
				<PriceAxis />
			</main>

			<div className="h-[19px] flex items-stretch border-t-2 border-[#505050] pl-[6px] text-[10px] whitespace-nowrap font-['Roboto',sans-serif]">
				<button className="h-4 w-[66px] shrink-0 bg-white border border-t-0 border-[#202020] leading-[14px]">USDJPY,H1</button>
				<div className="flex-1 min-w-0 flex overflow-hidden">
					{TABS.map((t) => (
						<button key={t} className="h-4 shrink-0 px-[9px] leading-[14px] text-[#808080] relative after:absolute after:right-0 after:top-[2px] after:h-[10px] after:w-px after:bg-[#808080] last:after:hidden">
							{t}
						</button>
					))}
				</div>
				<div className="flex shrink-0 gap-[11px] pr-2 h-4 items-center">
					<button aria-label="前のタブ">
						<svg width="4" height="6"><path d="M4,0v6L0,3z" fill="#707070" /></svg>
					</button>
					<button aria-label="次のタブ">
						<svg width="4" height="6"><path d="M0,0v6l4-3z" fill="#000000" /></svg>
					</button>
				</div>
			</div>

			<footer className="h-[18px] flex items-center text-[9px]">
				<div className="flex-1 min-w-0 pl-[2px] [font-feature-settings:'palt']">F1キーでヘルプが表示されます</div>
				<StatusCell className="w-[96px]">Default</StatusCell>
				<StatusCell className="w-[84px]">2025.04.24 08:00</StatusCell>
				<StatusCell className="w-[59px]">O: 142.747</StatusCell>
				<StatusCell className="w-[59px]">H: 142.949</StatusCell>
				<StatusCell className="w-[57px]">L: 142.722</StatusCell>
				<StatusCell className="w-[57px]">C: 142.779</StatusCell>
				<StatusCell className="w-[55px]">V: 7008</StatusCell>
				<StatusCell className="w-[124px] gap-[3px]">
					<svg width="20" height="11">
						{[0, 1, 2, 3, 4, 5, 6].map((k) => (
							<g key={k}>
								<rect x={k * 3} y="0" width="2" height="11" fill="#7c8c28" />
								<rect x={k * 3} y={8 - k} width="2" height={3 + k} fill="#1c4c7c" />
							</g>
						))}
					</svg>
					87804/2449 kb
					<svg width="12" height="12" className="ml-auto self-end">
						<path d="M12,1L1,12M12,5L5,12M12,9L9,12" stroke="#909090" />
					</svg>
				</StatusCell>
			</footer>
		</div>
	);
}
